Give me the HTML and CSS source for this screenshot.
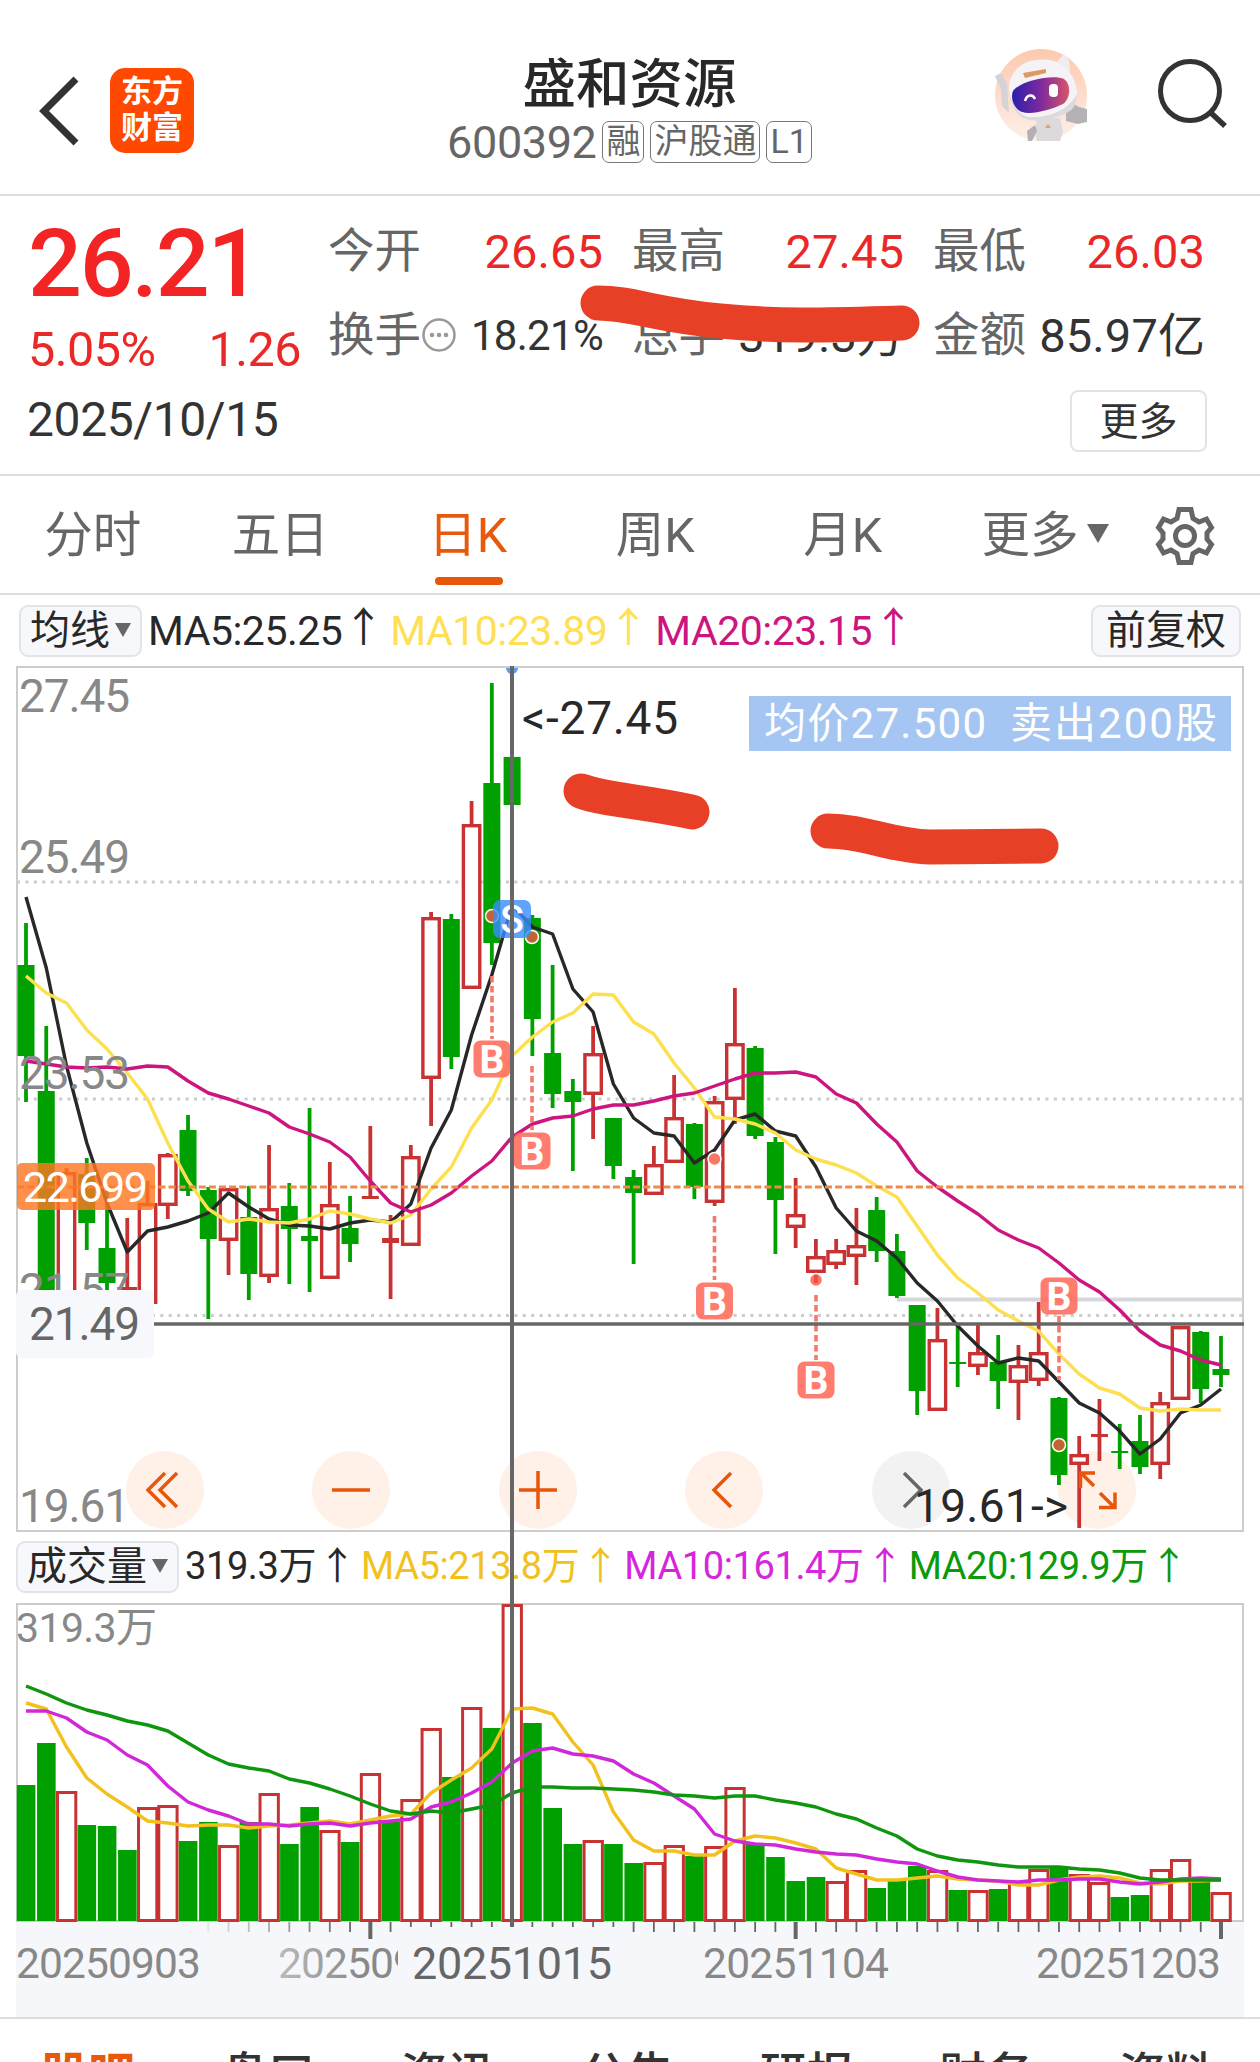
FILE: index.html
```html
<!DOCTYPE html>
<html lang="zh-CN">
<head>
  <meta charset="UTF-8">
  <meta name="viewport" content="width=device-width, initial-scale=1">
  <title>盛和资源 600392</title>
  <link rel="stylesheet" href="styles.css">
</head>
<body>
  <header class="header">
    <div class="header-left">
      <svg class="back" width="44" height="72" viewBox="0 0 44 72"><path d="M38 4L6 36l32 32" fill="none" stroke="#333" stroke-width="7"/></svg>
      <div class="app-logo"><span>东方</span><span>财富</span></div>
    </div>
    <div class="header-title">
      <h1>盛和资源</h1>
      <div class="code-row">
        <span class="code">600392</span>
        <span class="badge">融</span>
        <span class="badge">沪股通</span>
        <span class="badge">L1</span>
      </div>
    </div>
    <div class="header-right">
      <svg width="96" height="96" viewBox="994 47 96 96">
        <defs>
          <linearGradient id="visor" x1="0" y1="0" x2="1" y2="0">
            <stop offset="0" stop-color="#2a1fae"/>
            <stop offset=".5" stop-color="#7d2a9c"/>
            <stop offset="1" stop-color="#d8556a"/>
          </linearGradient>
          <linearGradient id="halo" x1="0" y1="0" x2="0" y2="1">
            <stop offset="0" stop-color="#fdc9ae"/>
            <stop offset="1" stop-color="#fdf0e9"/>
          </linearGradient>
        </defs>
        <circle cx="1041" cy="95" r="46" fill="url(#halo)"/>
        <path d="M1037 118h23l3 14-3 9h-23l-2-9z" fill="#dddadc"/>
        <path d="M1027 131l8-6 2 6-5 10h-4z" fill="#b3afb3"/>
        <path d="M1066 113l8-9 5 3 8 2v13l-9 2-12-3z" fill="#b5b2b6"/>
        <path d="M995 76l6-3 6 10 2 30-7-7-1-16z" fill="#d6d3d6"/>
        <path d="M1057 62l7-8 5 6 1 12-9 2z" fill="#f0edef"/>
        <path d="M1009 92c-2-9 4-26 22-31 16-4 32-1 41 15 6 12 7 27-1 34-9 7-28 12-42 10-12-2-18-14-20-28z" fill="#dddade"/>
        <path d="M1009 88c0-11 8-24 22-27 16-4 32-1 41 15 3 6 5 12 5 18-10 18-30 24-47 23-12-1-20-16-21-29z" fill="#f5f3f5"/>
        <path d="M1023 73l23-4v4l-21 5z" fill="#dd9a5e"/>
        <path d="M1013 91c7-10 40-17 51-12 8 6 6 20-1 25-13 6-31 11-41 8-8-3-12-14-9-21z" fill="url(#visor)"/>
        <rect x="1049" y="84" width="9" height="13" rx="4" fill="#fff"/>
        <path d="M1025 101c2-7 8-7 10-2" fill="none" stroke="#fff" stroke-width="2.500"/>
        <path d="M1045 128l3-4 3 4z" fill="#e59a70"/>
      </svg>
      <svg width="76" height="76" viewBox="1154 55 76 76"><circle cx="1190" cy="91" r="29.500" fill="none" stroke="#333" stroke-width="5"/><path d="M1210 112l15 14" stroke="#333" stroke-width="5.500"/></svg>
    </div>
  </header>

  <section class="quote">
    <div class="price-col">
      <div class="price">26.21</div>
      <div class="change"><span>5.05%</span><span>1.26</span></div>
    </div>
    <div class="stats">
      <div class="stat"><label>今开</label><b class="up">26.65</b></div>
      <div class="stat"><label>最高</label><b class="up">27.45</b></div>
      <div class="stat"><label>最低</label><b class="up">26.03</b></div>
      <div class="stat">
        <label>换手</label>
        <svg width="36" height="36" viewBox="-1 0 36 36"><circle cx="17" cy="18" r="15.500" fill="none" stroke="#999" stroke-width="2.500"/><g fill="#999"><circle cx="10" cy="18" r="2.300"/><circle cx="17" cy="18" r="2.300"/><circle cx="24" cy="18" r="2.300"/></g></svg>
        <b class="small">18.21%</b>
      </div>
      <div class="stat"><label>总手</label><b class="cjk">319.3万</b></div>
      <div class="stat"><label>金额</label><b class="cjk">85.97亿</b></div>
    </div>
    <div class="date-row">
      <span class="date">2025/10/15</span>
      <button class="more">更多</button>
    </div>
  </section>

  <nav class="tabs">
    <a>分时</a>
    <a>五日</a>
    <a class="active">日K</a>
    <a>周K</a>
    <a>月K</a>
    <a class="tab-more">更多<i class="tri tri-lg"></i></a>
    <svg class="gear" width="60" height="62" viewBox="-30 -31 60 62">
      <g fill="none" stroke="#666" stroke-width="5" stroke-linejoin="miter">
        <path d="M-6-26.500h12l2 9 6 3.500 7.500-3 5 8.500-4.500 5.500v6l4.500 5.500-5 8.500-7.500-3-6 3.500-2 9h-12l-2-9-6-3.500-7.500 3-5-8.500 4.500-5.500v-6l-4.500-5.500 5-8.500 7.500 3 6-3.500z"/>
        <circle r="9.500"/>
      </g>
    </svg>
  </nav>

  <div class="charts">
    <div class="legend">
      <span class="pill">均线<i class="tri"></i></span>
      <span class="ma c-black">MA5:25.25<em>↑</em></span>
      <span class="ma c-yellow">MA10:23.89<em>↑</em></span>
      <span class="ma c-pink">MA20:23.15<em>↑</em></span>
      <span class="pill pill-right">前复权</span>
    </div>
    <svg id="kline" class="plot" width="1260" height="866" viewBox="0 666 1260 866"></svg>
    <div class="legend legend-vol">
      <span class="pill">成交量<i class="tri"></i></span>
      <span class="ma c-black">319.3万<em>↑</em></span>
      <span class="ma c-gold">MA5:213.8万<em>↑</em></span>
      <span class="ma c-violet">MA10:161.4万<em>↑</em></span>
      <span class="ma c-green">MA20:129.9万<em>↑</em></span>
    </div>
    <svg id="volume" class="plot" width="1260" height="415" viewBox="0 1602 1260 415"></svg>
    <div class="crosshair"></div>
  </div>

  <nav class="bottom-tabs">
    <a class="active">股吧</a>
    <a>盘口</a>
    <a>资讯</a>
    <a>公告</a>
    <a>研报</a>
    <a>财务</a>
    <a>资料</a>
  </nav>

  <!-- hand drawn marks on top of everything -->
  <svg class="marks" width="1260" height="900" viewBox="0 0 1260 900">
    <g fill="none" stroke="#e84027" stroke-width="35" stroke-linecap="round" stroke-linejoin="round">
      <path d="M598 303C632 303 655 315 720 321S830 325 902 323"/>
      <path d="M581 791C605 800 640 801 692 812"/>
      <path d="M828 831C865 831 890 846 930 847L1041 846"/>
    </g>
  </svg>

  <script src="chart.js"></script>
</body>
</html>
```

FILE: styles.css
```css
* {
  box-sizing: border-box;
}
body {
  margin: 0;
  width: 1260px;
  height: 2062px;
  overflow: hidden;
  position: relative;
  background: #fff;
  color: #333;
  font-family: Roboto, "Noto Sans CJK SC", sans-serif;
}
i, em, b {
  font-style: normal;
  font-weight: 400;
}

/* header */
.header {
  height: 196px;
  border-bottom: 2px solid #ddd;
  display: flex;
  justify-content: space-between;
  padding: 0 30px 0 38px;
}
.header-left {
  width: 380px;
  display: flex;
  align-items: flex-start;
  padding-top: 68px;
}
.back {
  margin: 7px 28px 0 0;
}
.app-logo {
  width: 84px;
  height: 85px;
  border-radius: 15px;
  background: #ff4800;
  color: #fff;
  font-size: 31px;
  font-weight: 700;
  line-height: 36px;
  padding-top: 6px;
  display: flex;
  flex-direction: column;
  align-items: center;
}
.header-title {
  padding: 52px 9px 0 0;
  display: flex;
  flex-direction: column;
  align-items: center;
}
.header-title h1 {
  margin: 0;
  font-size: 53.5px;
  font-weight: 500;
  line-height: 66px;
  color: #282828;
}
.code-row {
  display: flex;
  align-items: center;
  height: 48px;
  gap: 6px;
  color: #666;
}
.code {
  font-size: 45px;
  letter-spacing: -.4px;
}
.badge {
  height: 42px;
  border: 1.5px solid #777;
  border-radius: 7px;
  padding: 0 3px;
  font-size: 34px;
  line-height: 38px;
}
.header-right {
  width: 380px;
  display: flex;
  justify-content: flex-end;
  gap: 64px;
}
.header-right svg:first-child {
  margin-top: 47px;
}
.header-right svg:last-child {
  margin-top: 55px;
}

/* quote */
.quote {
  height: 280px;
  border-bottom: 2px solid #ddd;
  padding: 13px 54px 0 28px;
  display: flex;
  flex-wrap: wrap;
  align-content: flex-start;
}
.price-col {
  width: 300px;
  height: 177px;
  color: #ea2828;
}
.price {
  font-size: 95px;
  font-weight: 500;
  letter-spacing: -2.2px;
  line-height: 110px;
  color: #f32424;
}
.change {
  display: flex;
  justify-content: space-between;
  width: 273px;
  font-size: 48.5px;
  line-height: 56px;
  margin-top: 3px;
  letter-spacing: -.5px;
}
.stats {
  width: 877px;
  display: grid;
  grid-template-columns: 275px 272px 272px;
  column-gap: 29px;
  grid-auto-rows: 84px;
}
.stat {
  display: flex;
  align-items: center;
}
.stat label {
  font-size: 46.5px;
  color: #666;
  margin-bottom: 9px;
}
.stat svg {
  margin-bottom: 1px;
}
.stat b {
  margin-left: auto;
  font-size: 47px;
  letter-spacing: .1px;
  white-space: nowrap;
}
.stat .up {
  color: #ea2828;
}
.stat .small {
  font-size: 42px;
  letter-spacing: -.7px;
}
.stat .cjk {
  margin-bottom: 8px;
}
.date-row {
  width: 100%;
  display: flex;
  justify-content: space-between;
  align-items: center;
  height: 62px;
  margin-top: 4px;
}
.date {
  font-size: 48px;
  letter-spacing: -.4px;
  margin: 0 0 3px -1px;
}
.more {
  width: 137px;
  height: 62px;
  margin-right: -1px;
  padding: 0 0 7px;
  border: 2px solid #e3e3e3;
  border-radius: 8px;
  background: #fff;
  color: #333;
  font: 39px/50px "Noto Sans CJK SC", sans-serif;
}

/* period tabs */
.tabs {
  height: 119px;
  border-bottom: 2px solid #ddd;
  display: flex;
  color: #666;
  font-size: 48.5px;
  line-height: 120px;
}
.tabs a {
  width: 187.5px;
  text-align: center;
  padding-right: 2px;
}
.tabs .active {
  color: #e8590c;
  position: relative;
}
.tabs .active::after {
  content: "";
  position: absolute;
  left: 60px;
  bottom: 8px;
  width: 68px;
  height: 8px;
  border-radius: 4px;
  background: #e8560a;
}
.tabs .tab-more {
  width: 216px;
  padding-left: 44px;
  text-align: left;
}
.gear {
  margin: 29px 0 0 1px;
}
.tri {
  display: inline-block;
  margin-left: 5px;
  border: 8.5px solid transparent;
  border-top: 14px solid #666;
  border-bottom: 0;
  vertical-align: 7px;
}
.tri-lg {
  border-width: 19px 11.5px 0;
  margin-left: 8px;
  vertical-align: 9px;
}

/* charts */
.charts {
  position: relative;
}
.legend {
  height: 71px;
  display: flex;
  align-items: center;
  padding: 0 19px 0 19px;
  font-size: 41px;
  line-height: 60px;
  letter-spacing: -.5px;
}
.pill {
  height: 52px;
  border: 2px solid #e2e4e8;
  border-radius: 9px;
  background: #f6f8fb;
  color: #282828;
  font-size: 40px;
  line-height: 47px;
  padding: 0 9px;
  margin-right: 6px;
  letter-spacing: 0;
  white-space: nowrap;
}
.pill-right {
  margin: 0 0 0 auto;
  padding: 0 13px;
}
.ma {
  display: flex;
  white-space: nowrap;
  margin-right: 10px;
}
.ma em {
  width: 34px;
  display: flex;
  justify-content: center;
  margin: -3px 0 0 4px;
}
.legend-vol {
  height: 70px;
  padding-left: 16px;
  font-size: 38px;
  line-height: 60px;
  letter-spacing: -.4px;
}
.legend-vol .ma {
  margin: -2px 7px 0 0;
}
.legend-vol em {
  margin-top: 0;
}
.c-black { color: #282828; }
.c-yellow { color: #ffdf55; }
.c-pink { color: #cc157f; }
.c-gold { color: #f2c11d; }
.c-violet { color: #d526dc; }
.c-green { color: #0a9a0a; }
.plot {
  display: block;
}
.crosshair {
  position: absolute;
  left: 510px;
  top: 71px;
  width: 4px;
  height: 1261px;
  background: #666;
}

/* bottom */
.bottom-tabs {
  height: 45px;
  border-top: 2px solid #ddd;
  overflow: hidden;
  display: flex;
  font-size: 47px;
  font-weight: 500;
  line-height: 70px;
  padding-top: 21px;
}
.bottom-tabs a {
  width: 179.6px;
  text-align: center;
  padding-right: 3px;
}
.bottom-tabs .active {
  color: #e8590c;
  font-weight: 700;
}
.marks {
  position: absolute;
  left: 0;
  top: 0;
}
```

FILE: chart.js
```js
const X0 = 26;
const STEP = 20.254;
const GREEN = '#00a000';
const RED = '#c93232';

// [up, high, body top, body bottom, low]
const candles = [
  [0,923,965,1056,1102],[0,1026,1091,1296,1300],[1,1168,1172,1320,1320],[0,1158,1174,1223,1250],[0,1191,1248,1283,1298],
  [1,1218,1287,1304,1304],[1,1181,1203,1304,1304],[1,1153,1154,1206,1219],[0,1115,1130,1191,1196],[0,1187,1190,1239,1319],
  [1,1188,1188,1241,1275],[0,1186,1217,1274,1300],[1,1145,1208,1277,1283],[0,1183,1206,1229,1284],[0,1108,1236,1241,1292],
  [1,1162,1204,1279,1279],[0,1196,1228,1244,1262],[1,1126,1196,1199,1199],[1,1215,1238,1243,1299],[1,1145,1156,1246,1246],
  [1,912,917,1079,1126],[0,914,919,1057,1069],[1,801,824,989,989],[0,683,783,943,965],[0,668,757,805,825],
  [0,915,918,1019,1056],[0,965,1053,1094,1108],[0,1079,1091,1102,1171],[1,1026,1053,1095,1139],[0,1118,1118,1166,1179],
  [0,1170,1177,1193,1264],[1,1146,1164,1195,1195],[1,1075,1117,1163,1163],[0,1123,1124,1187,1199],[1,1096,1101,1203,1206],
  [1,988,1043,1100,1124],[0,1046,1048,1136,1139],[0,1137,1142,1200,1254],[1,1178,1214,1228,1248],[1,1239,1256,1273,1283],
  [1,1239,1250,1265,1269],[1,1208,1245,1257,1285],[0,1197,1210,1251,1262],[0,1234,1251,1296,1298],[0,1305,1305,1391,1415],
  [1,1308,1339,1411,1411],[0,1325,1362,1364,1387],[1,1324,1352,1367,1375],[0,1335,1362,1381,1409],[1,1345,1365,1383,1420],
  [1,1302,1352,1381,1386],[0,1397,1398,1475,1485],[1,1436,1454,1465,1528],[1,1399,1434,1437,1461],[0,1424,1451,1453,1469],
  [0,1415,1441,1467,1474],[1,1392,1402,1465,1479],[1,1326,1326,1400,1400],[0,1331,1332,1389,1403],[0,1336,1369,1375,1387]
];

const ma5 = [897,968,1066,1143,1203,1252,1231,1227,1221,1213,1193,1207,1219,1225,1226,1229,1223,1220,1222,1204,1148,1110,1035,975,905,927,934,989,1012,1084,1118,1133,1136,1163,1150,1120,1114,1131,1136,1167,1208,1231,1241,1258,1283,1301,1326,1346,1363,1358,1361,1382,1403,1413,1431,1454,1439,1413,1405,1389];
const ma10 = [976,993,1003,1030,1049,1073,1099,1143,1181,1209,1222,1219,1222,1223,1219,1211,1214,1219,1223,1215,1189,1167,1128,1100,1056,1037,1022,1013,994,995,1022,1034,1063,1088,1117,1119,1124,1133,1150,1159,1165,1173,1186,1197,1226,1255,1278,1293,1310,1321,1331,1354,1374,1388,1394,1408,1411,1409,1410,1410];
const ma20 = [1061,1064,1067,1068,1067,1069,1066,1067,1081,1093,1099,1106,1113,1127,1134,1142,1157,1181,1203,1212,1205,1193,1176,1161,1137,1124,1118,1116,1109,1105,1105,1101,1096,1093,1086,1079,1073,1073,1072,1077,1094,1103,1124,1142,1171,1187,1201,1214,1230,1240,1248,1263,1280,1292,1310,1331,1345,1351,1360,1365];

const volUp = '001000110010100101011010100010011011000011000101011011001101'.split('');
const vol = [1785,1743,1791,1825,1826,1850,1807,1805,1841,1822,1845,1822,1793,1844,1807,1830,1842,1773,1822,1799,1728,1777,1707,1728,1604,1723,1808,1844,1840,1844,1863,1862,1845,1856,1846,1787,1844,1857,1881,1877,1881,1870,1888,1880,1866,1870,1890,1890,1889,1882,1869,1868,1874,1882,1897,1895,1869,1859,1881,1892];
const volMa5 = [1703,1709,1747,1778,1794,1807,1821,1823,1826,1825,1825,1828,1826,1825,1823,1821,1824,1820,1816,1814,1793,1780,1768,1749,1709,1708,1714,1742,1765,1812,1840,1851,1851,1855,1855,1841,1836,1838,1843,1849,1868,1874,1880,1880,1878,1876,1879,1880,1881,1885,1885,1880,1877,1876,1878,1883,1884,1881,1881,1880];
const volMa10 = [1711,1711,1718,1732,1740,1755,1765,1786,1802,1810,1816,1824,1824,1826,1824,1823,1826,1823,1821,1819,1807,1802,1793,1782,1763,1751,1748,1754,1756,1761,1774,1783,1796,1809,1834,1841,1844,1845,1849,1852,1854,1855,1859,1862,1864,1871,1877,1880,1881,1882,1880,1880,1879,1879,1882,1884,1882,1879,1878,1879];
const volMa20 = [1686,1694,1703,1710,1715,1721,1725,1731,1743,1755,1764,1768,1771,1779,1783,1789,1796,1804,1811,1814,1811,1813,1809,1805,1793,1787,1787,1788,1788,1789,1790,1792,1795,1796,1798,1796,1796,1800,1803,1807,1814,1819,1828,1836,1849,1856,1860,1862,1865,1867,1867,1867,1869,1870,1873,1878,1880,1880,1880,1880];

const x = i => X0 + i * STEP;

function line(pts, color) {
  const d = pts.map((y, i) => x(i).toFixed(1) + ',' + y).join(' ');
  return `<polyline points="${d}" fill="none" stroke="${color}" stroke-width="3.4" stroke-linejoin="round"/>`;
}

function seg(x1, y1, x2, y2, color, w, extra = '') {
  return `<line x1="${x1}" y1="${y1}" x2="${x2}" y2="${y2}" stroke="${color}" stroke-width="${w}" ${extra}/>`;
}

function text(str, tx, ty, size, width, color) {
  return `<text x="${tx}" y="${ty}" font-size="${size}" textLength="${width}" fill="${color}">${str}</text>`;
}

function candle([up, h, t, b, l], i) {
  const cx = x(i);
  const color = up ? RED : GREEN;
  let s = '';
  if (t > h) s += seg(cx, h, cx, t, color, 3.8);
  if (l > b) s += seg(cx, b, cx, l, color, 3.8);
  if (!up || b - t < 8) {
    s += `<rect x="${cx - 8.5}" y="${t}" width="17" height="${b - t}" fill="${color}"/>`;
  } else {
    s += `<rect x="${cx - 8.2}" y="${t + 1.7}" width="16.4" height="${b - t - 3.4}" fill="#fff" stroke="${color}" stroke-width="3.4"/>`;
  }
  return s;
}

function buy(cx, cy, dotY, from, to) {
  return seg(cx, from, cx, to, '#f4796b', 3.6, 'stroke-dasharray="6.500 3.500"') +
    `<circle cx="${cx}" cy="${dotY}" r="6.500" fill="#f4563f" fill-opacity=".8" stroke="#fff" stroke-width="1.500"/>` +
    `<rect x="${cx - 18.5}" y="${cy - 18.5}" width="37" height="37" rx="7" fill="#ff6f5e" fill-opacity=".9"/>` +
    `<text x="${cx}" y="${cy + 14}" text-anchor="middle" font-size="39" font-weight="700" fill="#fff">B</text>`;
}

function drawKline() {
  let s = '';
  s += '<rect x="17" y="667" width="1226" height="864" fill="none" stroke="#ccc" stroke-width="2"/>';
  [882, 1099, 1315.5].forEach(y => {
    s += seg(17, y, 1243, y, '#ccc', 3, 'stroke-dasharray="3 5.430"');
  });

  // zoom / pan buttons
  [165, 351, 538, 724, 911, 1097].forEach((cx, i) => {
    s += `<circle cx="${cx}" cy="1490" r="39" fill="${i === 4 ? '#f2f2f2' : '#fff0e8'}"/>`;
  });

  s += seg(897, 1299.5, 1243, 1299.5, '#d5d8dc', 4);
  s += candles.map(candle).join('');
  s += line(ma5, '#282828') + line(ma10, '#fde050') + line(ma20, '#cc157f');
  s += seg(17, 1187, 1243, 1187, '#f08a4b', 3, 'stroke-dasharray="7 3.100"');

  s += text('27.45', 19, 712, 46, 111, '#888');
  s += text('25.49', 19, 873, 46, 111, '#888');
  s += text('23.53', 19, 1089, 46, 111, '#888');
  s += text('21.57', 19, 1306, 46, 111, '#888');
  s += text('19.61', 19, 1522, 46, 111, '#888');

  s += '<rect x="17" y="1163" width="138" height="47" rx="5" fill="#ff7723" fill-opacity=".82"/>';
  s += text('22.699', 23, 1202, 43, 125, '#fff');

  s += `<g fill="none" stroke="#e8560c" stroke-width="3.500">
    <path d="M165 1473l-17 17 17 17M177 1473l-17 17 17 17"/>
    <path d="M332 1490h38M519 1490h38M538 1471v38"/>
    <path d="M731 1473l-17 17 17 17"/>
    <path d="M904 1473l17 17-17 17" stroke="#666"/>
    <path d="M1095 1473h-14.500v15M1081 1473l13 13M1100 1493l15 15M1099 1507.500h16v-15"/>
  </g>`;

  s += text('&lt;-27.45', 522, 734, 46, 156, '#282828');
  s += text('19.61-&gt;', 914, 1522, 46, 154, '#282828');

  s += '<path d="M506 668a6 6 0 0 0 12 0z" fill="#5a9cf0"/>';
  s += buy(492, 1059, 916, 976, 1039);
  s += buy(532, 1151, 937, 1066, 1130);
  s += buy(714.5, 1301, 1159, 1216, 1280);
  s += buy(816, 1380, 1280, 1295, 1360);
  s += buy(1059, 1296, 1445, 1316, 1380);

  s += '<rect x="493" y="900" width="38" height="38" rx="7" fill="#3a8bff" fill-opacity=".8"/>';
  s += '<text x="512" y="933" text-anchor="middle" font-size="39" font-weight="500" fill="#fff">S</text>';

  s += '<rect x="749" y="696" width="482" height="55" fill="#a5c6f2"/>';
  s += text('均价27.500', 764, 738, 42, 222, '#fff');
  s += text('卖出200股', 1010, 738, 42, 207, '#fff');

  s += seg(150, 1324, 1244, 1324, '#666', 3.5);
  s += '<rect x="16" y="1290" width="138" height="68" rx="6" fill="#f6f8fb"/>';
  s += text('21.49', 29, 1340, 46, 111, '#666');
  document.getElementById('kline').innerHTML = s;
}

function drawVolume() {
  let s = '<rect x="16" y="1922" width="1228" height="95" fill="#f6f7fa"/>';
  s += '<rect x="17" y="1604" width="1226" height="317" fill="none" stroke="#ccc" stroke-width="2"/>';
  s += text('319.3万', 16, 1642, 41, 141, '#888');
  vol.forEach((y, i) => {
    if (volUp[i] === '1') {
      s += `<rect x="${x(i) - 9}" y="${y + 1.5}" width="18.300" height="${1919 - y}" fill="#fff" stroke="${RED}" stroke-width="3"/>`;
    } else {
      s += `<rect x="${x(i) - 9.2}" y="${y}" width="18.600" height="${1921 - y}" fill="${GREEN}"/>`;
    }
  });
  s += line(volMa5, '#f2c11d') + line(volMa10, '#d028d8') + line(volMa20, '#0e960e');

  // time axis, the left part fades out under the first label
  for (let i = 9; i < 60; i++) {
    const major = i === 17 || i === 38 || i === 59;
    const len = major ? 17 : (i > 18 && i < 30 ? 5 : 10);
    s += seg(x(i), 1922, x(i), 1922 + len, '#666', major ? 4 : 1.8, `opacity="${Math.min(1, (i - 8) / 8)}"`);
  }
  s += '<defs><linearGradient id="fade"><stop offset="0" stop-color="#bbb"/><stop offset=".6" stop-color="#888"/></linearGradient>' +
    '<clipPath id="cut"><rect x="270" y="1930" width="128" height="60"/></clipPath></defs>';
  s += text('20250903', 16, 1978, 42.5, 185, '#888');
  s += '<g clip-path="url(#cut)">' + text('202509', 278, 1978, 42.5, 139, 'url(#fade)') + '</g>';
  s += text('20251015', 412, 1979, 45, 200, '#666');
  s += text('20251104', 703, 1978, 42.5, 186, '#888');
  s += text('20251203', 1036, 1978, 42.5, 185, '#888');
  document.getElementById('volume').innerHTML = s;
}

drawKline();
drawVolume();
```
